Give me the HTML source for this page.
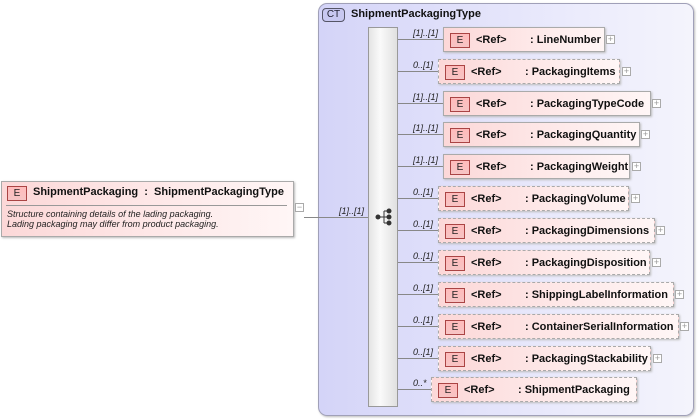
<!DOCTYPE html>
<html><head><meta charset="utf-8"><style>
*{margin:0;padding:0;box-sizing:border-box}
body{width:699px;height:420px;background:#fff;position:relative;overflow:hidden;font-family:"Liberation Sans",Arial,sans-serif;}
.a{position:absolute}
.ct{left:318px;top:3px;width:376px;height:413px;border:1px solid #a0a0b8;border-radius:9px;background:linear-gradient(to right,#d4d4f8,#ececfc 70%,#f4f4fc);box-shadow:1px 1px 2px #bbb}
.ctb{left:322px;top:8px;width:23px;height:14px;border:1px solid #556;border-radius:4px;background:#c8c8f0;font-size:10px;text-align:center;line-height:12px;color:#223}
.bar{left:368px;top:27px;width:30px;height:380px;background:linear-gradient(to right,#e4e4e4,#fafafa 40%,#e0e0e0);border:1px solid #999}
.el{height:25px;border:1px solid #aaa;background:linear-gradient(to right,#fcd8d8,#fff6f6);box-shadow:1px 1px 2px #bbb;font-size:11px;font-weight:bold;color:#111;white-space:nowrap}
.el.d{border:1px dashed #aaa}
.E{position:absolute;left:6px;top:5px;width:20px;height:15px;border:1px solid #a44;background:linear-gradient(#fbb,#f7c4c4);font-size:10px;font-weight:normal;text-align:center;line-height:13px;color:#222}
.ref{position:absolute;left:32px;top:6px}
.nm{position:absolute;left:86px;top:6px}
.pl{width:9px;height:9px;border:1px solid #aaa;background:#fff;font-size:9px;line-height:7px;text-align:center;color:#999}
.ln{height:1px;background:#888}
.lb{font-size:9px;font-style:italic;color:#222}
</style></head><body>
<div class="a ct"></div>
<div class="a ctb">CT</div>
<div class="a" style="left:351px;top:8px;font-size:11px;font-weight:bold;color:#111">ShipmentPackagingType</div>
<div class="a bar"></div>
<svg class="a" style="left:374px;top:207px" width="20" height="20"><g fill="#333" stroke="#333"><circle cx="4" cy="10" r="2"/><line x1="4" y1="10" x2="10" y2="10"/><line x1="10" y1="4" x2="10" y2="16"/><line x1="10" y1="4" x2="14" y2="4"/><line x1="10" y1="10" x2="14" y2="10"/><line x1="10" y1="16" x2="14" y2="16"/><circle cx="15" cy="4" r="2"/><circle cx="15" cy="10" r="2"/><circle cx="15" cy="16" r="2"/></g></svg>

<div class="a" style="left:1px;top:181px;width:293px;height:56px;border:1px solid #aaa;background:linear-gradient(to right,#fcd8d8,#fff6f6);box-shadow:1px 1px 2px #bbb"></div>
<div class="a E" style="left:7px;top:186px">E</div>
<div class="a" style="left:33px;top:186px;font-size:11px;font-weight:bold;color:#111">ShipmentPackaging&nbsp; : &nbsp;ShipmentPackagingType</div>
<div class="a" style="left:6px;top:205px;width:281px;height:1px;background:#999"></div>
<div class="a" style="left:7px;top:209px;font-size:9px;font-style:italic;color:#222;line-height:10px">Structure containing details of the lading packaging.<br>Lading packaging may differ from product packaging.</div>
<div class="a pl" style="left:295px;top:203px">−</div>
<div class="a ln" style="left:304px;top:217px;width:64px"></div>
<div class="a lb" style="left:339px;top:206px">[1]..[1]</div>

<div class="a ln" style="left:398px;top:39px;width:45px"></div><div class="a lb" style="left:413px;top:28px">[1]..[1]</div>
<div class="a el" style="left:443px;top:27px;width:162px"><div class="E">E</div><span class="ref">&lt;Ref&gt;</span><span class="nm">: LineNumber</span></div><div class="a pl" style="left:606px;top:35px">+</div>

<div class="a ln" style="left:398px;top:71px;width:40px"></div><div class="a lb" style="left:413px;top:60px">0..[1]</div>
<div class="a el d" style="left:438px;top:59px;width:182px"><div class="E">E</div><span class="ref">&lt;Ref&gt;</span><span class="nm">: PackagingItems</span></div><div class="a pl" style="left:622px;top:67px">+</div>

<div class="a ln" style="left:398px;top:103px;width:45px"></div><div class="a lb" style="left:413px;top:92px">[1]..[1]</div>
<div class="a el" style="left:443px;top:91px;width:208px"><div class="E">E</div><span class="ref">&lt;Ref&gt;</span><span class="nm">: PackagingTypeCode</span></div><div class="a pl" style="left:652px;top:99px">+</div>

<div class="a ln" style="left:398px;top:134px;width:45px"></div><div class="a lb" style="left:413px;top:123px">[1]..[1]</div>
<div class="a el" style="left:443px;top:122px;width:197px"><div class="E">E</div><span class="ref">&lt;Ref&gt;</span><span class="nm">: PackagingQuantity</span></div><div class="a pl" style="left:641px;top:130px">+</div>

<div class="a ln" style="left:398px;top:166px;width:45px"></div><div class="a lb" style="left:413px;top:155px">[1]..[1]</div>
<div class="a el" style="left:443px;top:154px;width:187px"><div class="E">E</div><span class="ref">&lt;Ref&gt;</span><span class="nm">: PackagingWeight</span></div><div class="a pl" style="left:632px;top:162px">+</div>

<div class="a ln" style="left:398px;top:198px;width:40px"></div><div class="a lb" style="left:413px;top:187px">0..[1]</div>
<div class="a el d" style="left:438px;top:186px;width:191px"><div class="E">E</div><span class="ref">&lt;Ref&gt;</span><span class="nm">: PackagingVolume</span></div><div class="a pl" style="left:631px;top:194px">+</div>

<div class="a ln" style="left:398px;top:230px;width:40px"></div><div class="a lb" style="left:413px;top:219px">0..[1]</div>
<div class="a el d" style="left:438px;top:218px;width:217px"><div class="E">E</div><span class="ref">&lt;Ref&gt;</span><span class="nm">: PackagingDimensions</span></div><div class="a pl" style="left:656px;top:226px">+</div>

<div class="a ln" style="left:398px;top:262px;width:40px"></div><div class="a lb" style="left:413px;top:251px">0..[1]</div>
<div class="a el d" style="left:438px;top:250px;width:212px"><div class="E">E</div><span class="ref">&lt;Ref&gt;</span><span class="nm">: PackagingDisposition</span></div><div class="a pl" style="left:652px;top:258px">+</div>

<div class="a ln" style="left:398px;top:294px;width:40px"></div><div class="a lb" style="left:413px;top:283px">0..[1]</div>
<div class="a el d" style="left:438px;top:282px;width:236px"><div class="E">E</div><span class="ref">&lt;Ref&gt;</span><span class="nm">: ShippingLabelInformation</span></div><div class="a pl" style="left:675px;top:290px">+</div>

<div class="a ln" style="left:398px;top:326px;width:40px"></div><div class="a lb" style="left:413px;top:315px">0..[1]</div>
<div class="a el d" style="left:438px;top:314px;width:241px"><div class="E">E</div><span class="ref">&lt;Ref&gt;</span><span class="nm">: ContainerSerialInformation</span></div><div class="a pl" style="left:680px;top:322px">+</div>

<div class="a ln" style="left:398px;top:358px;width:40px"></div><div class="a lb" style="left:413px;top:347px">0..[1]</div>
<div class="a el d" style="left:438px;top:346px;width:213px"><div class="E">E</div><span class="ref">&lt;Ref&gt;</span><span class="nm">: PackagingStackability</span></div><div class="a pl" style="left:653px;top:354px">+</div>

<div class="a ln" style="left:398px;top:389px;width:33px"></div><div class="a lb" style="left:413px;top:378px">0..*</div>
<div class="a el d" style="left:431px;top:377px;width:206px"><div class="E">E</div><span class="ref">&lt;Ref&gt;</span><span class="nm">: ShipmentPackaging</span></div>
</body></html>
